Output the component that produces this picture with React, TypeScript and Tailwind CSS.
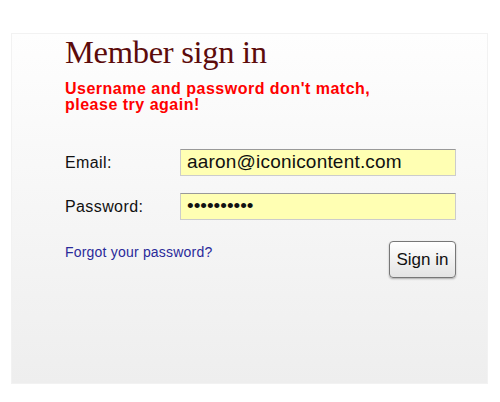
import React from "react";

export default function App() {
  return (
    <div className="w-[500px] h-[402px] bg-white pt-[33px] pl-[11px]" style={{ fontFamily: '"Liberation Sans", Arial, sans-serif' }}>
      <div className="w-[477px] h-[351px] bg-gradient-to-b from-[#fefefe] to-[#eeeeee] border border-[#f2f2f2] pl-[53px] pr-[31px]">
        <h1 className="text-[32.5px] leading-[34px] mt-[1px] text-[#5c0b0b] font-normal tracking-[-0.3px]" style={{ fontFamily: '"Liberation Serif", "Times New Roman", serif' }}>
          Member sign in
        </h1>
        <p className="mt-[12px] text-[16px] leading-[16px] font-bold text-[#ff0000] tracking-[0.5px]">
          Username and password don't match,
          <br />
          please try again!
        </p>
        <div className="mt-[36px] flex items-center">
          <label className="w-[115px] text-[16px] text-[#111] tracking-[0.4px]">Email:</label>
          <div className="w-[276px] h-[27px] bg-[#ffffb3] border border-[#cccccc] border-t-[#999999] flex items-center pl-[6px] text-[19px] text-[#111] tracking-[0.2px]">
            aaron@iconicontent.com
          </div>
        </div>
        <div className="mt-[17px] flex items-center">
          <label className="w-[115px] text-[16px] text-[#111] tracking-[0.4px]">Password:</label>
          <div className="w-[276px] h-[27px] bg-[#ffffb3] border border-[#cccccc] border-t-[#999999] flex items-center pl-[6px] text-[19px] text-[#111]">
            ••••••••••
          </div>
        </div>
        <div className="mt-[21px] flex items-start justify-between">
          <a className="text-[14px] leading-[16px] text-[#2a2a9a] mt-[3px] tracking-[0.2px]">Forgot your password?</a>
          <button className="w-[67px] h-[37px] rounded-[4px] border border-[#777] bg-gradient-to-b from-[#ffffff] to-[#e4e4e4] text-[17px] text-[#111] shadow-[0_1px_2px_rgba(0,0,0,0.3)]">
            Sign in
          </button>
        </div>
      </div>
    </div>
  );
}
